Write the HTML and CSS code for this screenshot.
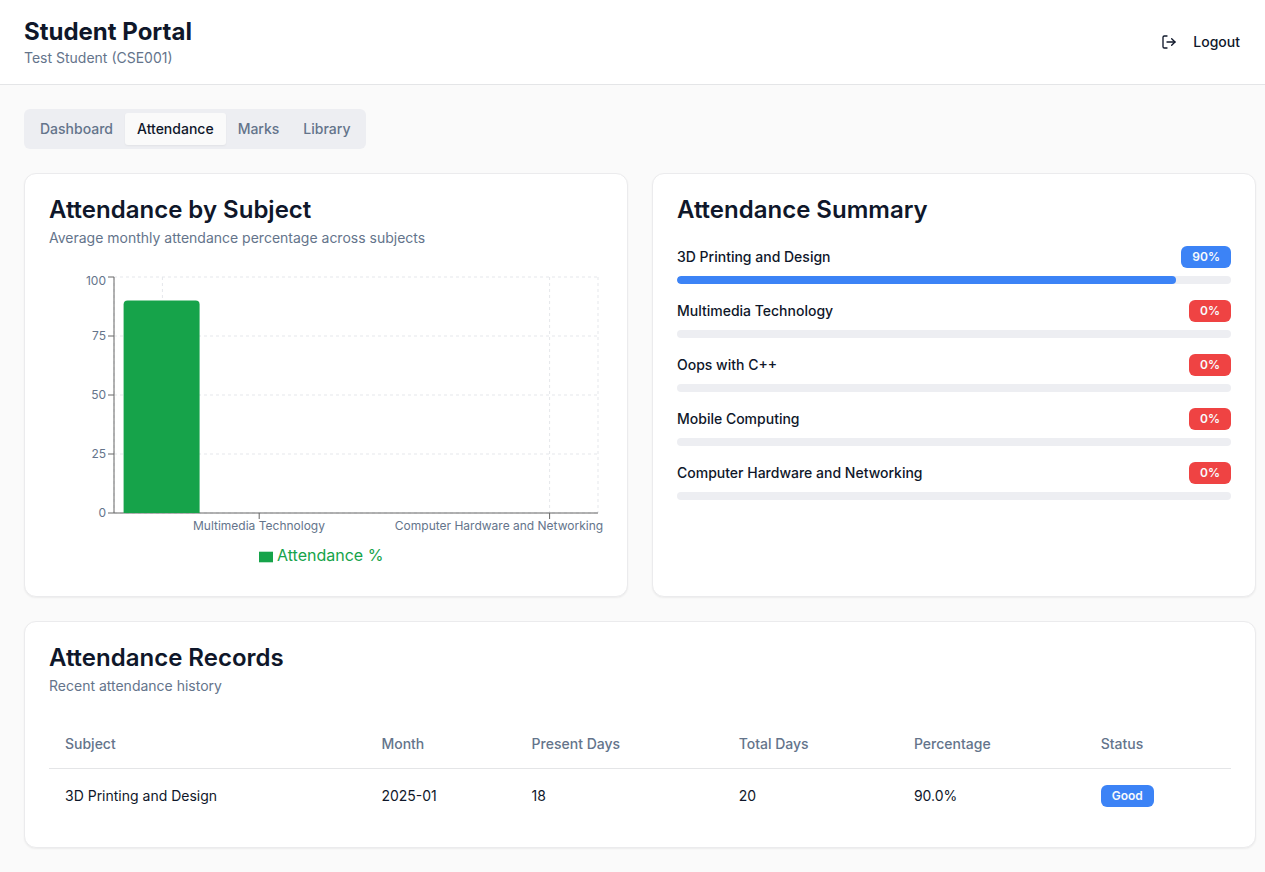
FILE: index.html
```html
<!DOCTYPE html>
<html lang="en">
<head>
<meta charset="utf-8">
<meta name="viewport" content="width=device-width, initial-scale=1">
<title>Student Portal</title>
<link rel="stylesheet" href="styles.css">
</head>
<body>
<header class="topbar">
  <div>
    <h1 class="topbar-title">Student Portal</h1>
    <p class="muted">Test Student (CSE001)</p>
  </div>
  <button class="logout" type="button">
    <svg class="icon" viewBox="0 0 24 24" aria-hidden="true"><path d="M9 21H5a2 2 0 0 1-2-2V5a2 2 0 0 1 2-2h4"/><path d="m16 17 5-5-5-5"/><path d="M21 12H9"/></svg>
    Logout
  </button>
</header>

<main class="content">
  <div class="tabs" role="tablist">
    <button class="tab" type="button" role="tab" aria-selected="false">Dashboard</button>
    <button class="tab tab-active" type="button" role="tab" aria-selected="true">Attendance</button>
    <button class="tab" type="button" role="tab" aria-selected="false">Marks</button>
    <button class="tab" type="button" role="tab" aria-selected="false">Library</button>
  </div>

  <div class="grid">
    <section class="card">
      <div class="card-header">
        <h2 class="card-title">Attendance by Subject</h2>
        <p class="muted">Average monthly attendance percentage across subjects</p>
      </div>
      <svg class="chart" viewBox="0 0 554 300" role="img" aria-label="Attendance percentage by subject">
        <g class="chart-grid">
          <path d="M65 5H549M65 64H549M65 123H549M65 182H549M65 241H549"/>
          <path d="M113.4 5V241M500.6 5V241M65 5V241M549 5V241"/>
        </g>
        <g class="chart-axis">
          <path d="M65 241H549M210.2 247V241M500.6 247V241"/>
          <path d="M65 5V241M59 5H65M59 64H65M59 123H65M59 182H65M59 241H65"/>
        </g>
        <path class="chart-bar" d="M74.6 241V32.6a4 4 0 0 1 4-4h68a4 4 0 0 1 4 4V241Z"/>
        <g class="chart-label chart-label-y">
          <text x="57" y="13">100</text>
          <text x="57" y="68">75</text>
          <text x="57" y="127">50</text>
          <text x="57" y="186">25</text>
          <text x="57" y="245">0</text>
        </g>
        <g class="chart-label chart-label-x">
          <text x="210" y="258">Multimedia Technology</text>
          <text x="450" y="258">Computer Hardware and Networking</text>
        </g>
        <path class="chart-bar" d="M210 279.7h14v10.6h-14z"/>
        <text class="chart-legend" x="228" y="289">Attendance %</text>
      </svg>
    </section>

    <section class="card">
      <div class="card-header">
        <h2 class="card-title">Attendance Summary</h2>
      </div>
      <ul class="summary">
        <li class="subject">
          <div class="subject-row"><span id="s1">3D Printing and Design</span><span class="badge">90%</span></div>
          <div class="progress" role="progressbar" aria-labelledby="s1" aria-valuenow="90"><div class="progress-fill" style="width:90%"></div></div>
        </li>
        <li class="subject">
          <div class="subject-row"><span id="s2">Multimedia Technology</span><span class="badge badge-low">0%</span></div>
          <div class="progress" role="progressbar" aria-labelledby="s2" aria-valuenow="0"></div>
        </li>
        <li class="subject">
          <div class="subject-row"><span id="s3">Oops with C++</span><span class="badge badge-low">0%</span></div>
          <div class="progress" role="progressbar" aria-labelledby="s3" aria-valuenow="0"></div>
        </li>
        <li class="subject">
          <div class="subject-row"><span id="s4">Mobile Computing</span><span class="badge badge-low">0%</span></div>
          <div class="progress" role="progressbar" aria-labelledby="s4" aria-valuenow="0"></div>
        </li>
        <li class="subject">
          <div class="subject-row"><span id="s5">Computer Hardware and Networking</span><span class="badge badge-low">0%</span></div>
          <div class="progress" role="progressbar" aria-labelledby="s5" aria-valuenow="0"></div>
        </li>
      </ul>
    </section>
  </div>

  <section class="card">
    <div class="card-header">
      <h2 class="card-title">Attendance Records</h2>
      <p class="muted">Recent attendance history</p>
    </div>
    <table class="records">
      <thead>
        <tr><th>Subject</th><th>Month</th><th>Present Days</th><th>Total Days</th><th>Percentage</th><th>Status</th></tr>
      </thead>
      <tbody>
        <tr><td>3D Printing and Design</td><td>2025-01</td><td>18</td><td>20</td><td>90.0%</td><td><span class="badge">Good</span></td></tr>
      </tbody>
    </table>
  </section>
</main>
</body>
</html>
```
FILE: styles.css
```css
*, *::before, *::after {
  box-sizing: border-box;
}

body {
  margin: 0;
  background: #fafafa;
  color: #0f172a;
  font-family: Inter, "Liberation Sans", sans-serif;
  font-size: 14px;
  line-height: 20px;
}

h1, h2, p, ul {
  margin: 0;
  padding: 0;
}

button {
  border: 0;
  background: transparent;
  color: inherit;
  font: inherit;
  font-weight: 500;
  cursor: pointer;
}

.muted {
  color: #64748b;
}

.topbar {
  display: flex;
  align-items: center;
  justify-content: space-between;
  padding: 16px 9px 16px 24px;
  border-bottom: 1px solid #e4e5e7;
  background: #fff;
}

.topbar-title {
  font-size: 24px;
  line-height: 32px;
  font-weight: 700;
}

.logout {
  display: flex;
  align-items: center;
  gap: 16px;
  height: 40px;
  padding: 0 16px;
}

.icon {
  width: 16px;
  height: 16px;
  fill: none;
  stroke: currentColor;
  stroke-width: 2;
  stroke-linecap: round;
  stroke-linejoin: round;
}

.content {
  display: flex;
  flex-direction: column;
  gap: 24px;
  padding: 24px 9px 24px 24px;
}

.tabs {
  display: flex;
  align-self: flex-start;
  padding: 4px;
  border-radius: 6px;
  background: #edeef2;
}

.tab {
  padding: 6px 12px;
  border-radius: 3px;
  color: #64748b;
}

.tab-active {
  background: #fafafa;
  color: #0f172a;
  box-shadow: 0 1px 2px rgb(0 0 0 / 5%);
}

.grid {
  display: grid;
  grid-template-columns: repeat(auto-fit, minmax(400px, 1fr));
  gap: 24px;
}

.card {
  padding: 24px;
  border: 1px solid #ebebed;
  border-radius: 12px;
  background: #fff;
  box-shadow: 0 1px 2px rgb(0 0 0 / 6%);
}

.card-header {
  display: flex;
  flex-direction: column;
  gap: 6px;
  padding-bottom: 24px;
}

.card-title {
  font-size: 24px;
  line-height: 24px;
  font-weight: 600;
}

.chart {
  display: block;
  width: 100%;
  overflow: visible;
}

.chart-grid {
  fill: none;
  stroke: #e5e7eb;
  stroke-dasharray: 3 3;
}

.chart-axis {
  fill: none;
  stroke: #666;
}

.chart-bar {
  fill: #16a34a;
}

.chart-label {
  fill: #64748b;
  font-size: 12px;
}

.chart-label-y {
  text-anchor: end;
}

.chart-label-x {
  text-anchor: middle;
}

.chart-legend {
  fill: #16a34a;
  font-size: 16px;
}

.summary {
  display: flex;
  flex-direction: column;
  gap: 16px;
  list-style: none;
}

.subject {
  display: flex;
  flex-direction: column;
  gap: 8px;
}

.subject-row {
  display: flex;
  align-items: center;
  justify-content: space-between;
  font-weight: 500;
}

.badge {
  display: inline-flex;
  padding: 2px 10px;
  border: 1px solid transparent;
  border-radius: 6px;
  background: #3c83f6;
  color: #f8fafc;
  font-size: 12px;
  line-height: 16px;
  font-weight: 600;
}

.badge-low {
  background: #ef4343;
}

.progress {
  height: 8px;
  overflow: hidden;
  border-radius: 4px;
  background: #edeef2;
}

.progress-fill {
  height: 100%;
  border-radius: 4px;
  background: #3c83f6;
}

.records {
  width: 100%;
  border-collapse: collapse;
  text-align: left;
}

.records th {
  height: 48px;
  padding: 0 16px;
  border-bottom: 1px solid #e4e5e7;
  color: #64748b;
  font-weight: 500;
}

.records td {
  padding: 16px;
}

.records .badge {
  vertical-align: middle;
}
```
